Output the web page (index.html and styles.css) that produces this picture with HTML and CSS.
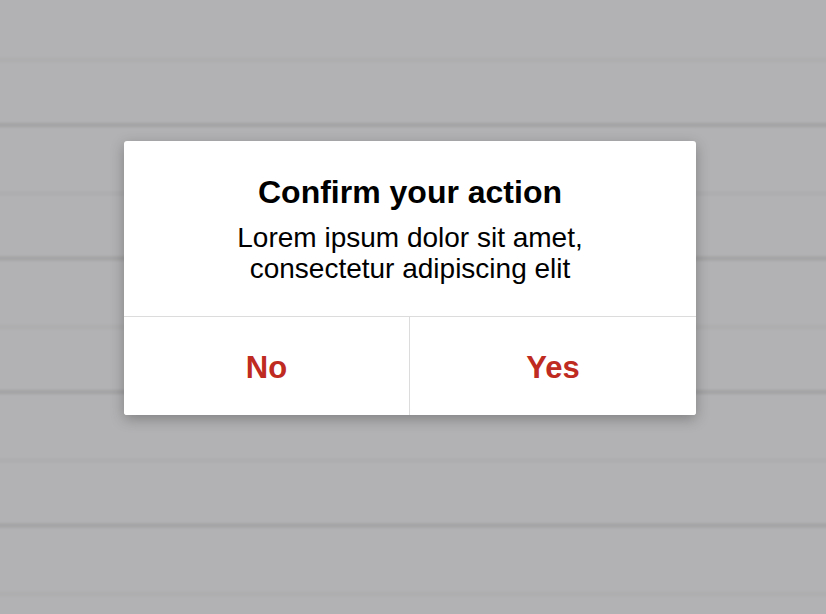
FILE: index.html
```html
<!DOCTYPE html>
<html>
<head>
<meta charset="utf-8">
<link rel="stylesheet" href="styles.css">
</head>
<body>
<div class="backdrop">
  <div class="dialog">
    <div class="dialog-body">
      <h1 class="dialog-title">Confirm your action</h1>
      <p class="dialog-text">Lorem ipsum dolor sit amet,<br>consectetur adipiscing elit</p>
    </div>
    <div class="dialog-actions">
      <button class="dialog-btn">No</button>
      <button class="dialog-btn">Yes</button>
    </div>
  </div>
</div>
</body>
</html>
```

FILE: styles.css
```css
html, body {
  margin: 0;
  padding: 0;
  height: 100%;
}
body {
  font-family: "Liberation Sans", Arial, Helvetica, sans-serif;
  background-color: #b2b2b4;
  background-image:
    linear-gradient(to bottom, rgba(0,0,0,0) 0, rgba(0,0,0,0.025) 3px, rgba(0,0,0,0.025) 5px, rgba(0,0,0,0) 8px),
    linear-gradient(to bottom, rgba(0,0,0,0) 0, rgba(0,0,0,0.07) 3px, rgba(0,0,0,0.07) 5px, rgba(0,0,0,0) 8px);
  background-size: 100% 133.5px, 100% 133.5px;
  background-position: 0 56px, 0 121px;
  background-repeat: repeat-y;
}
.backdrop {
  display: flex;
  justify-content: center;
  padding-top: 141px;
  padding-right: 6px;
}
.dialog {
  width: 572px;
  background: #fff;
  border-radius: 3px;
  box-shadow: 0 4px 14px rgba(0,0,0,0.28);
  overflow: hidden;
}
.dialog-body {
  height: 176px;
  box-sizing: border-box;
  padding-top: 31px;
  text-align: center;
  border-bottom: 1px solid #dcdcdc;
}
.dialog-title {
  margin: 0;
  font-size: 32px;
  font-weight: bold;
  line-height: 40px;
  color: #000;
}
.dialog-text {
  margin: 10px 0 0;
  font-size: 28px;
  line-height: 31px;
  color: #000;
}
.dialog-actions {
  display: flex;
  height: 98px;
}
.dialog-btn {
  flex: 1;
  border: 0;
  background: #fff;
  font-family: inherit;
  font-size: 31px;
  font-weight: bold;
  color: #bf2a21;
  padding: 4px 0 0;
  margin: 0;
}
.dialog-btn:first-child {
  flex: 0 0 285px;
}
.dialog-btn + .dialog-btn {
  border-left: 1px solid #dcdcdc;
}
```
